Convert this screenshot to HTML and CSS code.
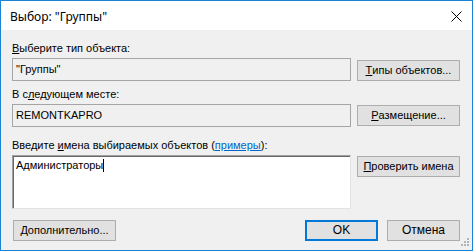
FILE: index.html
```html
<!DOCTYPE html>
<html lang="ru">
<head>
<meta charset="utf-8">
<link rel="stylesheet" href="styles.css">
</head>
<body>
<div class="window">
  <div class="titlebar">
    <span class="title">Выбор: "Группы"</span>
    <svg class="close" width="11" height="11" viewBox="0 0 11 11"><path d="M0.5 0.5 L10.5 10.5 M10.5 0.5 L0.5 10.5" stroke="#000" stroke-width="1" fill="none"/></svg>
  </div>
  <div class="content">
    <div class="section s1">
      <div class="label"><u>В</u>ыберите тип объекта:</div>
      <div class="field">"Группы"</div>
      <div class="btn b1"><u>Т</u>ипы объектов...</div>
    </div>
    <div class="section s2">
      <div class="label">В с<u>л</u>едующем месте:</div>
      <div class="field">REMONTKAPRO</div>
      <div class="btn b2"><u>Р</u>азмещение...</div>
    </div>
    <div class="section s3">
      <div class="label">Введите <u>и</u>мена выбираемых объектов (<span class="link">примеры</span>):</div>
      <div class="area">Администраторы<span class="caret"></span></div>
      <div class="btn b2"><u>П</u>роверить имена</div>
    </div>
    <div class="footer">
      <div class="btn adv"><u>Д</u>ополнительно...</div>
      <div class="spacer"></div>
      <div class="btn ok">OK</div>
      <div class="btn cancel">Отмена</div>
    </div>
  </div>
  <svg class="grip" width="9" height="9" viewBox="0 0 9 9">
    <rect x="6" y="0" width="2" height="2" fill="#b4b4b4"/>
    <rect x="3" y="3" width="2" height="2" fill="#b4b4b4"/>
    <rect x="6" y="3" width="2" height="2" fill="#b4b4b4"/>
    <rect x="0" y="6" width="2" height="2" fill="#b4b4b4"/>
    <rect x="3" y="6" width="2" height="2" fill="#b4b4b4"/>
    <rect x="6" y="6" width="2" height="2" fill="#b4b4b4"/>
  </svg>
</div>
</body>
</html>
```
FILE: styles.css
```css
html, body {
  margin: 0;
  padding: 0;
  background: #f0f0f0;
}
.window {
  position: relative;
  width: 473px;
  height: 251px;
  box-sizing: border-box;
  border: 1px solid #1883d7;
  background: #f0f0f0;
  font-family: "Liberation Sans", Arial, sans-serif;
  font-size: 11px;
  color: #000;
  overflow: hidden;
}
.titlebar {
  height: 29px;
  background: #fff;
  display: flex;
  align-items: center;
  justify-content: space-between;
  padding: 0 10px 0 9px;
}
.title {
  font-family: "Noto Sans", "Open Sans", sans-serif;
  font-size: 12px;
  line-height: 16px;
  padding-top: 3px;
  color: #000;
}
.close {
  display: block;
  margin-top: 1px;
}
.content {
  padding: 0 12px 0 11px;
}
.section {
  display: grid;
  grid-template-columns: 339px 103px;
  column-gap: 6px;
}
.s1 { margin-top: 12px; }
.s2 { margin-top: 7px; }
.s3 { margin-top: 12px; }
.label {
  grid-column: 1 / 3;
  grid-row: 1;
  height: 13px;
  line-height: 13px;
  margin-bottom: 3px;
  white-space: nowrap;
}
.field {
  grid-column: 1;
  grid-row: 2;
  height: 23px;
  box-sizing: border-box;
  border: 1px solid #a5a5a5;
  background: #f0f0f0;
  padding-left: 3px;
  line-height: 21px;
}
.area {
  grid-column: 1;
  grid-row: 2;
  height: 54px;
  box-sizing: border-box;
  background: #fff;
  border-top: 1px solid #a0a0a0;
  border-left: 1px solid #a0a0a0;
  border-right: 1px solid #e3e3e3;
  border-bottom: 1px solid #e3e3e3;
  box-shadow: inset 1px 1px 0 #696969;
  padding: 3px 3px 0 3px;
  line-height: 13px;
}
.caret {
  display: inline-block;
  width: 1px;
  height: 13px;
  background: #000;
  vertical-align: top;
}
.link {
  color: #0066cc;
  text-decoration: underline;
}
.btn {
  height: 21px;
  box-sizing: border-box;
  border: 1px solid #adadad;
  background: #e1e1e1;
  display: flex;
  align-items: center;
  justify-content: center;
  line-height: 13px;
  white-space: nowrap;
}
.section .btn {
  grid-column: 2;
  grid-row: 2;
  align-self: start;
}
.b1 { margin-top: 2px; }
.b2 { margin-top: 1px; }
.footer {
  display: flex;
  margin-top: 11px;
}
.spacer { flex: 1; }
.adv {
  width: 103px;
  margin-left: 1px;
}
.ok {
  width: 73px;
  border: 2px solid #0078d7;
  font-size: 12px;
}
.cancel {
  width: 73px;
  margin-left: 9px;
  font-size: 12px;
}
.grip {
  position: absolute;
  right: 2px;
  bottom: 3px;
}
```
